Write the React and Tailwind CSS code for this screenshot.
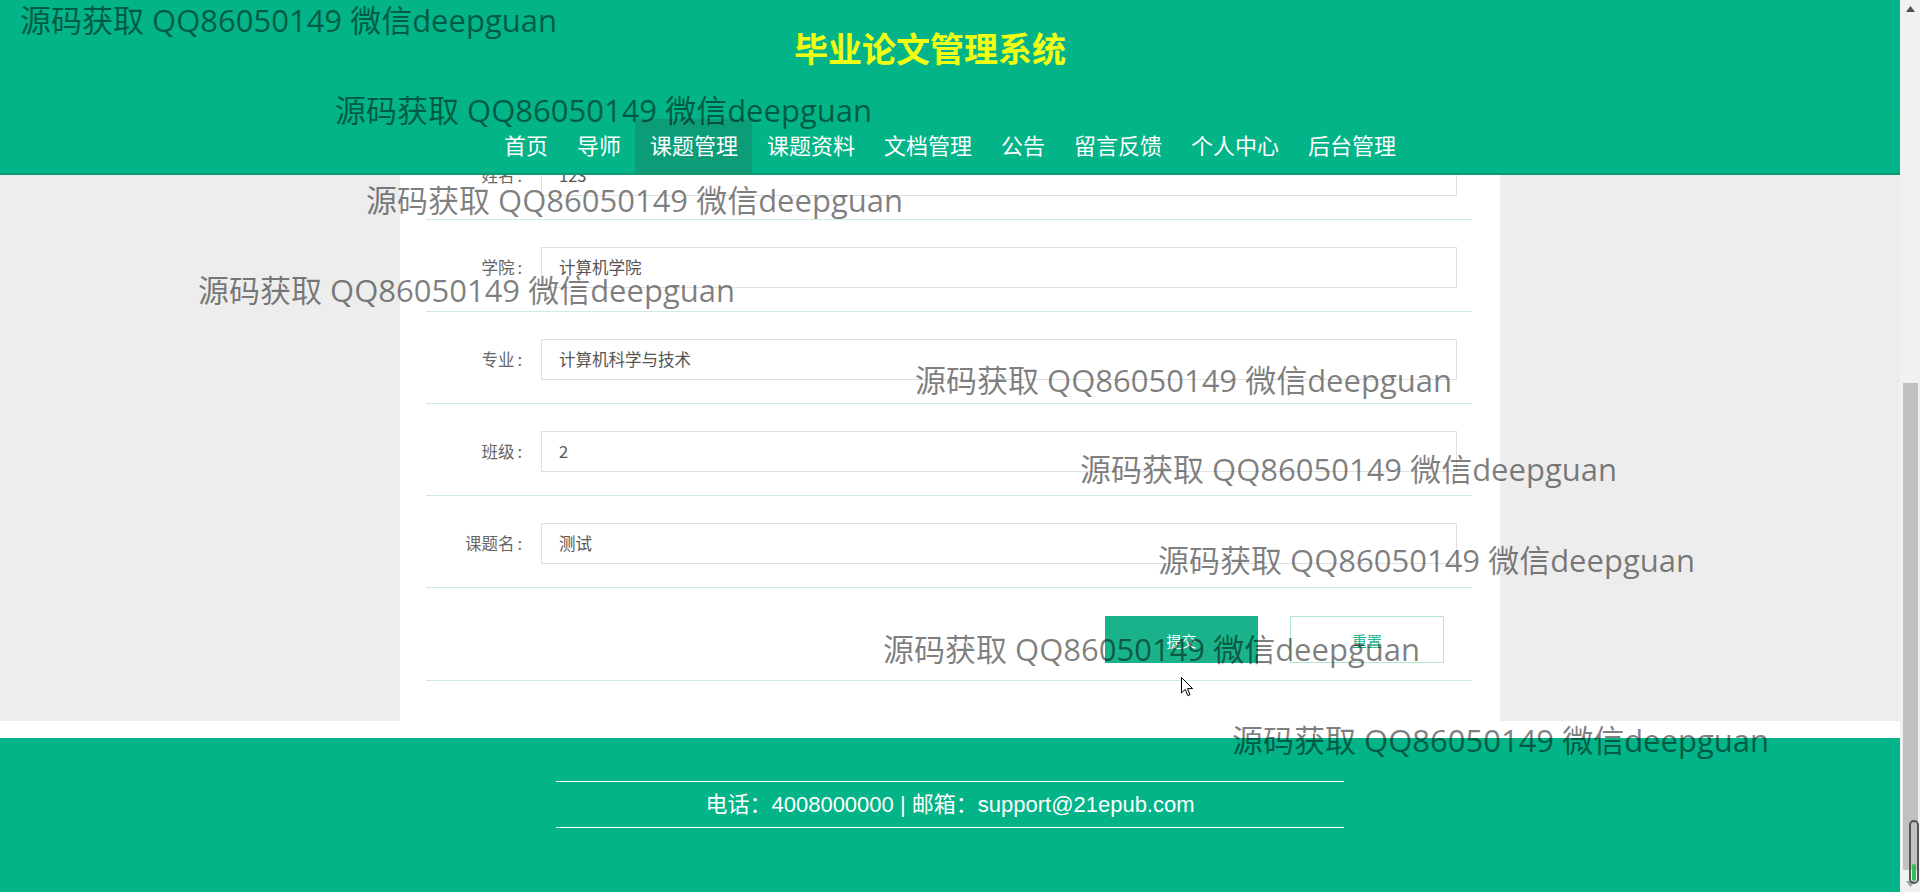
import React from 'react';

const cjk = { fontFamily: '"Noto Sans CJK SC", "Liberation Sans", sans-serif' };

const navItems = ['首页', '导师', '课题管理', '课题资料', '文档管理', '公告', '留言反馈', '个人中心', '后台管理'];

const fields = [
  { label: '姓名', value: '123' },
  { label: '学院', value: '计算机学院' },
  { label: '专业', value: '计算机科学与技术' },
  { label: '班级', value: '2' },
  { label: '课题名', value: '测试' },
];

// watermark overlays: [left, top]
const marks = [
  [20, 5],
  [335, 95],
  [366, 185],
  [198, 275],
  [915, 365],
  [1080, 454],
  [1158, 545],
  [883, 634],
  [1232, 725],
];

const Watermark = ({ left, top }) => (
  <div
    className="pointer-events-none absolute z-20 whitespace-nowrap text-[31px] leading-[31px] text-black/50"
    style={{ left, top, fontFamily: '"Open Sans", "Noto Sans CJK SC", sans-serif' }}
  >
    源码获取 QQ86050149 微信deepguan
  </div>
);

const FormRow = ({ label, value }) => (
  <div className="flex items-center border-b border-[#cbece1] pt-[27px] pb-[23px]">
    <label className="w-[100px] pr-[4px] text-right text-[16.5px] text-[#666]">
      {label}
      <span className="ml-[3px]">:</span>
    </label>
    <div className="ml-[15px] flex h-[41px] w-[916px] items-center border border-[#e0e0e0] bg-white px-[17px] text-[16.5px] text-[#555]">
      {value}
    </div>
  </div>
);

export default function App() {
  return (
    <div className="flex h-[892px] w-[1920px] overflow-hidden bg-white" style={cjk}>
      <div className="relative flex w-[1900px] flex-col overflow-hidden">
        {/* fixed header over the scrolled page */}
        <header className="absolute inset-x-0 top-0 z-10 border-b-2 border-[#0c9a75] bg-[#02b487]">
          <div className="h-[118px] pt-[31px] pr-[40px] text-center text-[34px] font-bold leading-[34px] text-[#f0ff12]">
            毕业论文管理系统
          </div>
          <nav className="flex h-[55px] justify-center border-t border-[#07ad83]">
            {navItems.map((item) => (
              <a
                key={item}
                className={`px-[14.5px] pb-[4px] text-[22px] leading-[51px] text-white ${item === '课题管理' ? 'bg-[#0d9c78]' : ''}`}
              >
                {item}
              </a>
            ))}
          </nav>
        </header>

        {/* form section */}
        <main className="bg-[#ededed]">
          <div className="mx-auto w-[1100px] bg-white pt-[128px] pb-[40px] pl-[26px] pr-[28px]">
            {fields.map((f) => (
              <FormRow key={f.label} label={f.label} value={f.value} />
            ))}
            <div className="flex justify-end gap-[32px] border-b border-[#cbece1] pt-[28px] pb-[17px] pr-[28px]">
              <button className="h-[47px] w-[153px] bg-[#19b28a] pt-[4px] text-[15px] text-white">提交</button>
              <button className="h-[47px] w-[154px] border border-[#b3e5d5] bg-white pt-[3px] text-[15px] text-[#1fb38c]">
                重置
              </button>
            </div>
          </div>
        </main>

        <div className="h-[17px] bg-white" />

        <footer className="flex-1 bg-[#02b487] pt-[43px]">
          <div
            className="mx-auto w-[788px] border-y border-white text-center text-[22px] leading-[45px] text-white"
            style={{ fontFamily: '"Liberation Sans", "Noto Sans CJK SC", sans-serif' }}
          >
            电话：4008000000 | 邮箱：support@21epub.com
          </div>
        </footer>

        {marks.map(([l, t], i) => (
          <Watermark key={i} left={l} top={t} />
        ))}

        {/* mouse pointer */}
        <svg className="pointer-events-none absolute z-30" style={{ left: 1181, top: 677 }} width="13" height="20" viewBox="0 0 13 20">
          <path d="M0.5 0.5 L0.5 16 L4.2 12.4 L6.8 18.6 L9 17.7 L6.5 11.6 L11.6 11.6 Z" fill="white" stroke="black" strokeWidth="1" strokeLinejoin="round" />
        </svg>
      </div>

      {/* scrollbar */}
      <div className="relative flex w-[20px] flex-col items-center bg-[#f1f1f1]">
        <svg className="mt-[6px]" width="9" height="6" viewBox="0 0 9 6">
          <path d="M4.5 0 L9 6 L0 6 Z" fill="#505050" />
        </svg>
        <div className="mt-[371px] h-[487px] w-[15px] bg-[#c1c1c1]" />
        <svg className="mt-[11px]" width="9" height="6" viewBox="0 0 9 6">
          <path d="M0 0 L9 0 L4.5 6 Z" fill="#a0a0a0" />
        </svg>
        <div className="absolute right-[1px] top-[820px] flex h-[64px] w-[10px] flex-col justify-end rounded-[5px] border-2 border-[#555] p-[1px]">
          <div className="h-[17px] w-full rounded-[2px] bg-[#2fbf5a]" />
        </div>
      </div>
    </div>
  );
}
